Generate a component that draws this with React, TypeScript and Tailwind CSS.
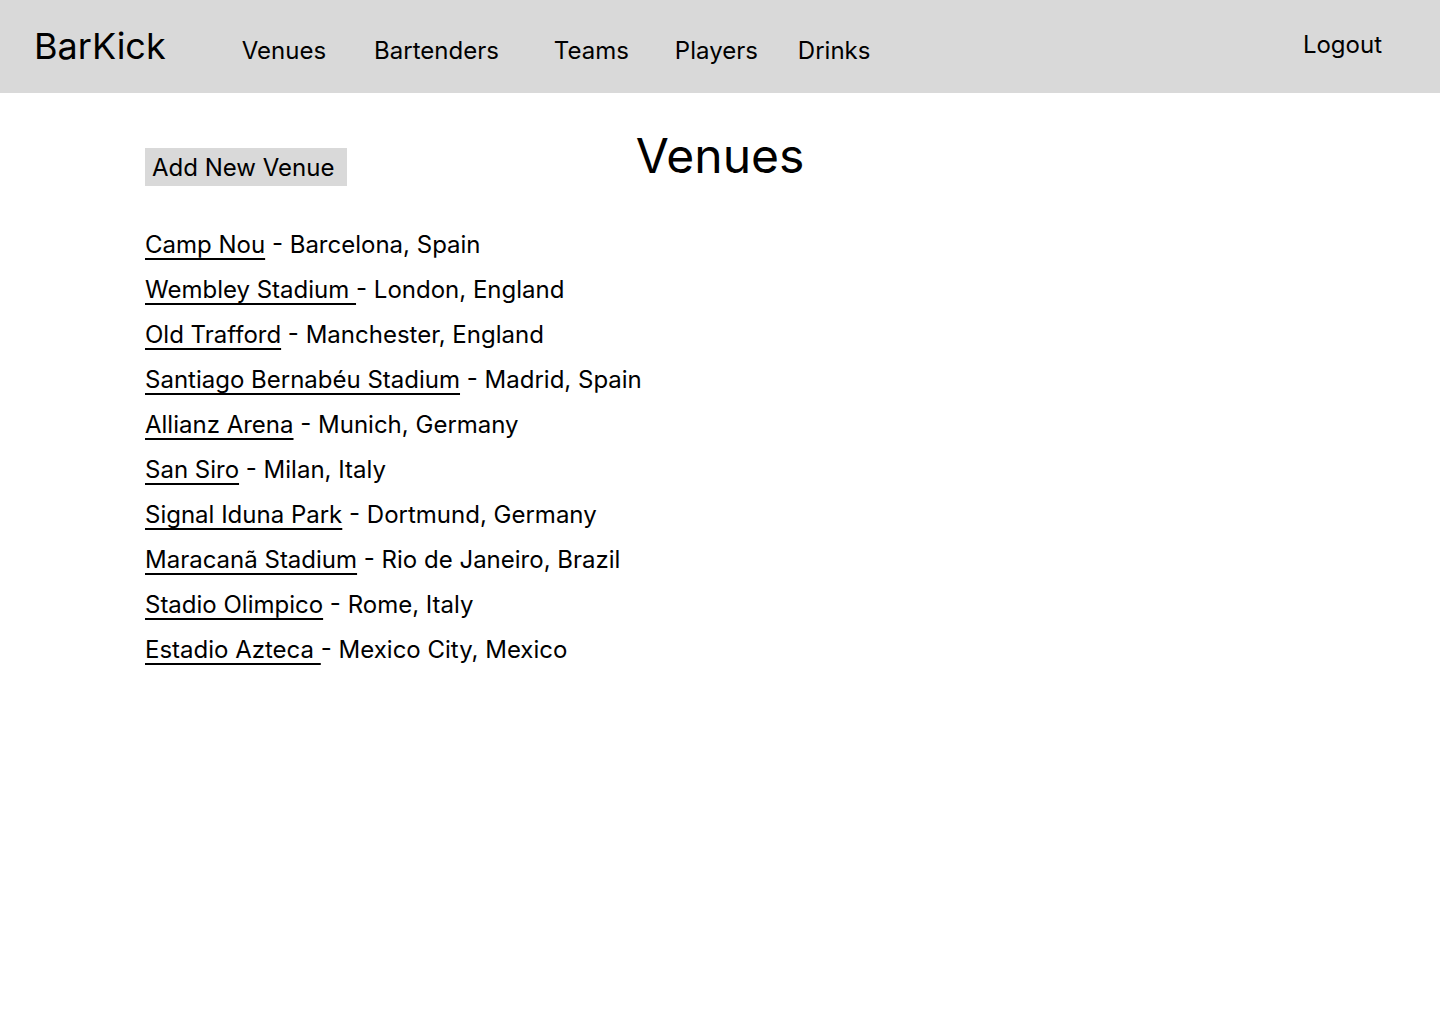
import React from "react";

const navLinks = [
  { label: "Venues", ml: "ml-[76px]" },
  { label: "Bartenders", ml: "ml-[48px]" },
  { label: "Teams", ml: "ml-[55px]" },
  { label: "Players", ml: "ml-[46px]" },
  { label: "Drinks", ml: "ml-[40px]" },
];

const venues = [
  { name: "Camp Nou", place: "Barcelona, Spain" },
  { name: "Wembley Stadium ", place: "London, England" },
  { name: "Old Trafford", place: "Manchester, England" },
  { name: "Santiago Bernabéu Stadium", place: "Madrid, Spain" },
  { name: "Allianz Arena", place: "Munich, Germany" },
  { name: "San Siro", place: "Milan, Italy" },
  { name: "Signal Iduna Park", place: "Dortmund, Germany" },
  { name: "Maracanã Stadium", place: "Rio de Janeiro, Brazil" },
  { name: "Stadio Olimpico", place: "Rome, Italy" },
  { name: "Estadio Azteca ", place: "Mexico City, Mexico" },
];

export default function App() {
  return (
    <div className="min-h-screen bg-white text-black font-['Inter',sans-serif]">
      {/* Top bar */}
      <header className="flex h-[93px] w-full items-start bg-[#d9d9d9] pl-[34px] pr-[58px]">
        <a href="#" className="mt-[28px] text-[36px] leading-none">
          BarKick
        </a>
        <nav className="mt-[39px] flex items-start">
          {navLinks.map((item) => (
            <a key={item.label} href="#" className={`${item.ml} text-[24px] leading-none`}>
              {item.label}
            </a>
          ))}
        </nav>
        <a href="#" className="ml-auto mt-[33px] text-[24px] leading-none">
          Logout
        </a>
      </header>

      {/* Heading row */}
      <div className="grid grid-cols-[1fr_auto_1fr] items-start">
        <div className="pl-[145px] pt-[55px]">
          <button
            type="button"
            className="h-[38px] bg-[#d9d9d9] pl-[7px] pr-[13px] pt-[1px] text-left text-[24px] leading-none"
          >
            Add New Venue
          </button>
        </div>
        <h1 className="pt-[39px] text-[48px] leading-none font-normal">Venues</h1>
        <div />
      </div>

      {/* Venue list */}
      <ul className="mt-[36px] pl-[145px]">
        {venues.map((v) => (
          <li key={v.name} className="text-[24px] leading-[45px]">
            <a href="#" className="underline decoration-[1.5px] underline-offset-[5px] whitespace-pre">
              {v.name}
            </a>
            <span>{v.name.endsWith(" ") ? "" : " "}- {v.place}</span>
          </li>
        ))}
      </ul>
    </div>
  );
}
